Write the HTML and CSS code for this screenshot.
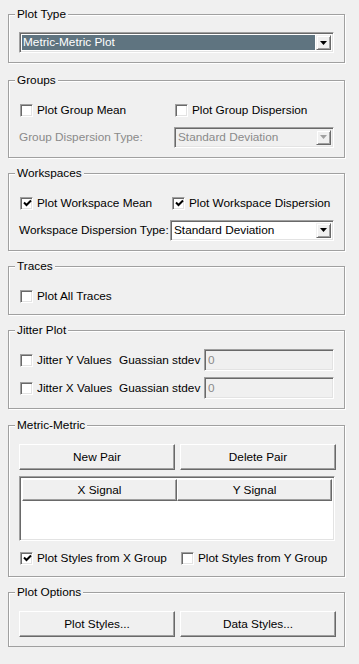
FILE: index.html
```html
<!DOCTYPE html>
<html lang="en">
<head>
  <meta charset="UTF-8" />
  <title>Plot Settings</title>
  <link rel="stylesheet" href="styles.css">
</head>
<body>
  <!-- Plot Type -->
  <div class="group">
    <div class="group-title">Plot Type</div>
    <div class="combo combo-full first">
      <span class="combo-text selected">Metric-Metric Plot</span>
      <span class="combo-btn"><svg width="7" height="4" viewBox="0 0 7 4"><polygon points="0,0 7,0 3.5,4" fill="#000"/></svg></span>
    </div>
  </div>

  <!-- Groups -->
  <div class="group groups">
    <div class="group-title">Groups</div>
    <div class="row first">
      <label class="check w-groups"><span class="box"></span>Plot Group Mean</label>
      <label class="check"><span class="box"></span>Plot Group Dispersion</label>
    </div>
    <div class="row">
      <span class="label disabled">Group Dispersion Type:</span>
      <div class="combo combo-groups disabled">
        <span class="combo-text">Standard Deviation</span>
        <span class="combo-btn"><svg width="7" height="4" viewBox="0 0 7 4"><polygon points="0,0 7,0 3.5,4" fill="#a0a0a0"/></svg></span>
      </div>
    </div>
  </div>

  <!-- Workspaces -->
  <div class="group">
    <div class="group-title">Workspaces</div>
    <div class="row first">
      <label class="check w-workspace"><span class="box"><svg width="9" height="9" viewBox="0 0 9 9"><polyline points="1,3.5 3.5,6 8,1.5" fill="none" stroke="#000" stroke-width="2"/></svg></span>Plot Workspace Mean</label>
      <label class="check"><span class="box"><svg width="9" height="9" viewBox="0 0 9 9"><polyline points="1,3.5 3.5,6 8,1.5" fill="none" stroke="#000" stroke-width="2"/></svg></span>Plot Workspace Dispersion</label>
    </div>
    <div class="row">
      <span class="label">Workspace Dispersion Type:</span>
      <div class="combo combo-workspace">
        <span class="combo-text">Standard Deviation</span>
        <span class="combo-btn"><svg width="7" height="4" viewBox="0 0 7 4"><polygon points="0,0 7,0 3.5,4" fill="#000"/></svg></span>
      </div>
    </div>
  </div>

  <!-- Traces -->
  <div class="group traces">
    <div class="group-title">Traces</div>
    <div class="row first">
      <label class="check"><span class="box"></span>Plot All Traces</label>
    </div>
  </div>

  <!-- Jitter Plot -->
  <div class="group jitter">
    <div class="group-title">Jitter Plot</div>
    <div class="row first">
      <label class="check w-jitter"><span class="box"></span>Jitter Y Values</label>
      <span class="label">Guassian stdev</span>
      <input class="field" type="text" value="0" disabled />
    </div>
    <div class="row">
      <label class="check w-jitter"><span class="box"></span>Jitter X Values</label>
      <span class="label">Guassian stdev</span>
      <input class="field" type="text" value="0" disabled />
    </div>
  </div>

  <!-- Metric-Metric -->
  <div class="group metric">
    <div class="group-title">Metric-Metric</div>
    <div class="buttons first">
      <button class="btn">New Pair</button>
      <button class="btn">Delete Pair</button>
    </div>
    <div class="table">
      <div class="table-head">
        <span class="head-cell">X Signal</span>
        <span class="head-cell">Y Signal</span>
      </div>
      <div class="table-body"></div>
    </div>
    <div class="row">
      <label class="check w-metric"><span class="box"><svg width="9" height="9" viewBox="0 0 9 9"><polyline points="1,3.5 3.5,6 8,1.5" fill="none" stroke="#000" stroke-width="2"/></svg></span>Plot Styles from X Group</label>
      <label class="check"><span class="box"></span>Plot Styles from Y Group</label>
    </div>
  </div>

  <!-- Plot Options -->
  <div class="group">
    <div class="group-title">Plot Options</div>
    <div class="buttons first">
      <button class="btn">Plot Styles...</button>
      <button class="btn">Data Styles...</button>
    </div>
  </div>
</body>
</html>
```

FILE: styles.css
```css
body {
  margin: 0;
  padding: 14px 0 0 8px;
  background: #f0f0f0;
  font-family: "Liberation Sans", Arial, sans-serif;
  font-size: 11.8px;
  color: #000;
  display: flex;
  flex-direction: column;
  gap: 15px;
}

/* group box with etched border */
.group {
  width: 337px;
  box-sizing: border-box;
  border: 1px solid #a0a0a0;
  box-shadow: 1px 1px 0 #fff, inset 1px 1px 0 #fff;
  padding: 0 8px 9px 10px;
}
.group.groups {
  margin-top: 2px;
}
.group.traces {
  padding-bottom: 7px;
}
.group.metric {
  margin-top: 1px;
  padding-bottom: 7px;
}

.group-title {
  width: fit-content;
  margin: -8px 0 0 -4px;
  padding: 0 2px;
  line-height: 14px;
  background: #f0f0f0;
}

.first {
  margin-top: 12px;
}
.combo.first {
  margin-top: 11px;
}

.row {
  display: flex;
  align-items: center;
  height: 22px;
}
.row + .row {
  margin-top: 5px;
}
.jitter .row + .row {
  margin-top: 6px;
}
.metric .row {
  margin-top: 6px;
}

/* checkboxes */
.check {
  display: flex;
  align-items: center;
  gap: 4px;
  margin-left: 1px;
  white-space: nowrap;
}
.check.w-groups { width: 154px; }
.check.w-workspace { width: 151px; }
.check.w-jitter { width: 99px; }
.check.w-metric { width: 160px; }

.box {
  width: 13px;
  height: 13px;
  box-sizing: border-box;
  background: #fff;
  border: 1px solid;
  border-color: #a0a0a0 #fff #fff #a0a0a0;
  box-shadow: inset 1px 1px 0 #696969, inset -1px -1px 0 #e3e3e3;
  display: flex;
  align-items: center;
  justify-content: center;
  padding: 1px 0 0 1px;
}

.label {
  white-space: nowrap;
}
.label.disabled {
  color: #8a8a8a;
}

/* combo boxes */
.combo {
  display: flex;
  height: 21px;
  box-sizing: border-box;
  border: 1px solid;
  border-color: #a0a0a0 #fff #fff #a0a0a0;
  box-shadow: inset 1px 1px 0 #696969, inset -1px -1px 0 #e3e3e3;
  background: #fff;
  padding: 2px;
}
.combo-full { width: 315px; }
.combo-groups { width: 160px; margin-left: auto; margin-right: 2px; }
.combo-workspace { width: 164px; margin-left: auto; margin-right: 2px; }
.combo.disabled {
  background: #f0f0f0;
  color: #8a8a8a;
}

.combo-text {
  flex: 1;
  line-height: 15px;
  padding-left: 1px;
  margin-right: 1px;
  white-space: nowrap;
}
.combo-text.selected {
  background: #5f7480;
  color: #fff;
}

.combo-btn {
  width: 15px;
  box-sizing: border-box;
  background: #f0f0f0;
  border: 1px solid;
  border-color: #f0f0f0 #696969 #696969 #f0f0f0;
  box-shadow: inset 1px 1px 0 #fff, inset -1px -1px 0 #a0a0a0;
  display: flex;
  align-items: center;
  justify-content: center;
}

/* text field */
.field {
  width: 130px;
  height: 22px;
  box-sizing: border-box;
  margin: 0 2px 0 auto;
  padding: 0 0 0 3px;
  font: inherit;
  color: #8a8a8a;
  background: #f0f0f0;
  border: 1px solid;
  border-color: #a0a0a0 #fff #fff #a0a0a0;
  box-shadow: inset 1px 1px 0 #696969, inset -1px -1px 0 #e3e3e3;
}

/* push buttons */
.buttons {
  display: grid;
  grid-template-columns: 1fr 1fr;
  gap: 5px;
}
.btn {
  height: 26px;
  font: inherit;
  color: #000;
  background: #f0f0f0;
  border: 1px solid;
  border-color: #fff #696969 #696969 #fff;
  box-shadow: inset -1px -1px 0 #a0a0a0;
  padding: 0;
}

/* list table */
.table {
  margin-top: 6px;
  width: 316px;
  height: 65px;
  box-sizing: border-box;
  border: 1px solid;
  border-color: #a0a0a0 #fff #fff #a0a0a0;
  box-shadow: inset 1px 1px 0 #696969, inset -1px -1px 0 #e3e3e3;
  background: #fff;
  padding: 2px;
  display: flex;
  flex-direction: column;
}
.table-head {
  display: grid;
  grid-template-columns: 155px 1fr;
}
.head-cell {
  height: 22px;
  box-sizing: border-box;
  text-align: center;
  line-height: 20px;
  background: #f0f0f0;
  border: 1px solid;
  border-color: #fff #696969 #696969 #fff;
  box-shadow: inset -1px -1px 0 #a0a0a0;
}
.table-body {
  flex: 1;
}
```
